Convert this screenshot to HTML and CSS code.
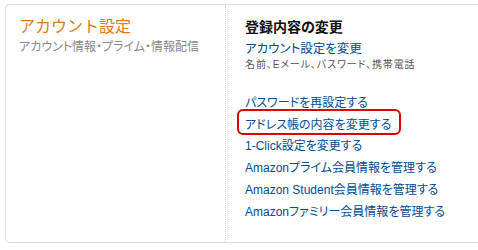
FILE: index.html
```html
<!DOCTYPE html>
<html lang="ja">
<head>
<meta charset="utf-8">
<link rel="stylesheet" href="styles.css">
</head>
<body>
<div class="box">
  <div class="left">
    <div class="title">アカウント設定</div>
    <div class="subtitle">アカウント情報・プライム・情報配信</div>
  </div>
  <div class="right">
    <div class="heading">登録内容の変更</div>
    <a class="link main">アカウント設定を変更</a>
    <div class="note">名前、Eメール、パスワード、携帯電話</div>
    <ul class="links">
      <li><a class="link">パスワードを再設定する</a></li>
      <li><a class="link marked">アドレス帳の内容を変更する</a></li>
      <li><a class="link">1-Click設定を変更する</a></li>
      <li><a class="link">Amazonプライム会員情報を管理する</a></li>
      <li><a class="link">Amazon Student会員情報を管理する</a></li>
      <li><a class="link">Amazonファミリー会員情報を管理する</a></li>
    </ul>
  </div>
</div>
</body>
</html>
```

FILE: styles.css
```css
html, body {
  margin: 0;
  padding: 0;
  background: #fff;
}
body {
  font-family: "Liberation Sans", "Noto Sans CJK JP", sans-serif;
  font-feature-settings: "palt";
}
.box {
  margin: 4px 0 0 5px;
  height: 237px;
  border: 1px solid #dddddd;
  border-right: none;
  border-radius: 5px 0 0 5px;
  display: flex;
}
.left {
  width: 220px;
  border-right: 1px dotted #cccccc;
  padding: 12px 0 0 13px;
  box-sizing: border-box;
}
.title {
  font-size: 16px;
  line-height: 20px;
  color: #e47911;
  font-feature-settings: normal;
}
.subtitle {
  margin-top: 2px;
  font-size: 12px;
  line-height: 16px;
  color: #888888;
}
.right {
  padding: 13px 0 0 19px;
  display: flex;
  flex-direction: column;
  align-items: flex-start;
}
.heading {
  font-size: 14px;
  font-weight: bold;
  line-height: 18px;
  color: #111111;
}
.link {
  color: #004b91;
  font-size: 12px;
  text-decoration: none;
}
.main {
  margin-top: 4px;
  font-size: 12.5px;
  line-height: 18px;
}
.note {
  font-size: 10px;
  line-height: 14px;
  color: #555555;
  letter-spacing: 0.9px;
}
.links {
  list-style: none;
  margin: 20px 0 0;
  padding: 0;
}
.links li {
  line-height: 20.7px;
}
.marked {
  position: relative;
}
.marked::after {
  content: "";
  position: absolute;
  left: -8px;
  right: -10px;
  top: -9px;
  bottom: -3px;
  border: 2px solid #dd0000;
  border-radius: 6px;
}
```
